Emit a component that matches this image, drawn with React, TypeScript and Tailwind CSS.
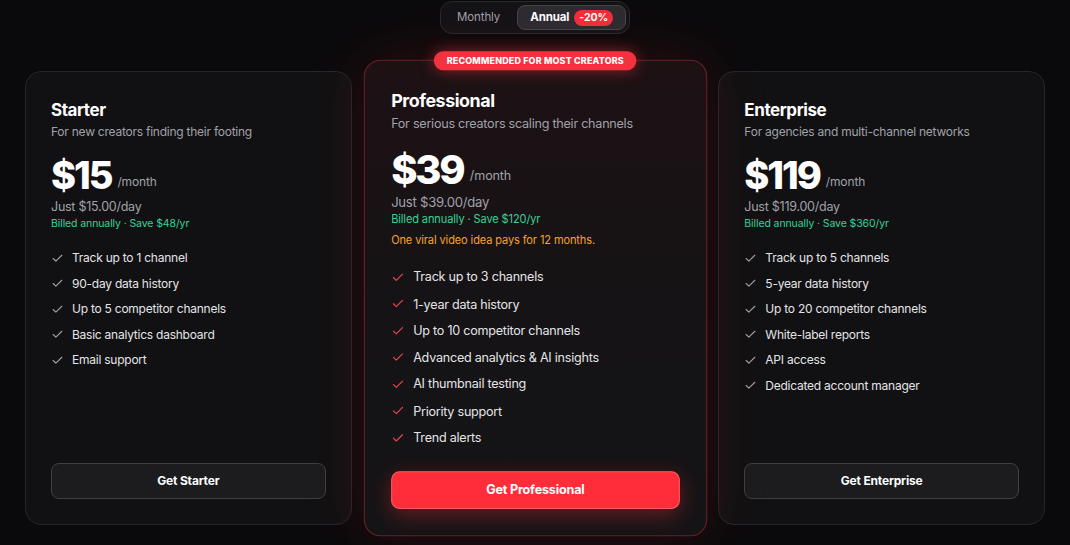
import React from "react";

type Plan = {
  name: string;
  tagline: string;
  price: string;
  perDay: string;
  billed: string;
  note?: string;
  features: string[];
  cta: string;
  featured?: boolean;
};

const plans: Plan[] = [
  {
    name: "Starter",
    tagline: "For new creators finding their footing",
    price: "$15",
    perDay: "Just $15.00/day",
    billed: "Billed annually · Save $48/yr",
    features: [
      "Track up to 1 channel",
      "90-day data history",
      "Up to 5 competitor channels",
      "Basic analytics dashboard",
      "Email support",
    ],
    cta: "Get Starter",
  },
  {
    name: "Professional",
    tagline: "For serious creators scaling their channels",
    price: "$39",
    perDay: "Just $39.00/day",
    billed: "Billed annually · Save $120/yr",
    note: "One viral video idea pays for 12 months.",
    features: [
      "Track up to 3 channels",
      "1-year data history",
      "Up to 10 competitor channels",
      "Advanced analytics & AI insights",
      "AI thumbnail testing",
      "Priority support",
      "Trend alerts",
    ],
    cta: "Get Professional",
    featured: true,
  },
  {
    name: "Enterprise",
    tagline: "For agencies and multi-channel networks",
    price: "$119",
    perDay: "Just $119.00/day",
    billed: "Billed annually · Save $360/yr",
    features: [
      "Track up to 5 channels",
      "5-year data history",
      "Up to 20 competitor channels",
      "White-label reports",
      "API access",
      "Dedicated account manager",
    ],
    cta: "Get Enterprise",
  },
];

function Check({ red }: { red?: boolean }) {
  return (
    <svg
      viewBox="0 0 24 24"
      className={red ? "h-[13px] w-[13px] shrink-0 text-[#f04452]" : "h-[13px] w-[13px] shrink-0 text-[#a1a1aa]"}
      fill="none"
      stroke="currentColor"
      strokeWidth={2}
      strokeLinecap="round"
      strokeLinejoin="round"
    >
      <path d="M20 6 9 17l-5-5" />
    </svg>
  );
}

function PlanCard({ plan }: { plan: Plan }) {
  const f = plan.featured;
  return (
    <div
      className={
        f
          ? "relative z-10 flex h-full scale-[1.05] flex-col rounded-2xl border border-[#6f1f27] bg-gradient-to-b from-[#1d1114] via-[#151315] to-[#141416] p-[25px] shadow-[0_0_60px_rgba(220,38,38,0.16)]"
          : "relative flex h-full flex-col rounded-2xl border border-[#26262a] bg-[#111113] p-[25px]"
      }
    >
      {f && (
        <div className="absolute left-1/2 top-0 -translate-x-1/2 -translate-y-1/2 whitespace-nowrap rounded-full bg-[#f2333f] px-3 py-[4px] text-[8.5px] font-extrabold uppercase leading-[10px] tracking-[0.02em] text-white shadow-[0_0_14px_rgba(242,51,63,0.55)]">
          Recommended for most creators
        </div>
      )}
      <h3 className="-mt-px text-[17px] font-bold leading-7 tracking-[-0.025em] text-white">{plan.name}</h3>
      <p className="text-[12px] leading-4 tracking-[-0.02em] text-[#a1a1aa]">{plan.tagline}</p>

      <div className="mt-4 flex items-end gap-[6px]">
        <span className="text-[38px] font-extrabold leading-[38px] tracking-[-0.055em] text-white">
          {plan.price}
        </span>
        <span className="pb-[4px] text-[12px] leading-4 tracking-[-0.01em] text-[#a1a1aa]">/month</span>
      </div>
      <p className="mt-1 text-[12.5px] leading-[18px] tracking-[-0.02em] text-[#a1a1aa]">{plan.perDay}</p>
      <p className="text-[10.5px] leading-4 tracking-[-0.01em] text-[#34d399]">{plan.billed}</p>
      {plan.note && (
        <p className="mt-1 text-[10.5px] leading-4 tracking-[-0.01em] text-[#f5a524]">{plan.note}</p>
      )}

      <ul className="mt-4 flex flex-col gap-[5.5px]">
        {plan.features.map((item) => (
          <li
            key={item}
            className="flex items-center gap-2 text-[12px] leading-5 tracking-[-0.02em] text-[#e4e4e7]"
          >
            <Check red={f} />
            <span>{item}</span>
          </li>
        ))}
      </ul>

      <button
        className={
          f
            ? "mt-auto h-9 w-full rounded-lg border border-[#ff5a63] bg-[#ff2d3a] text-[12px] font-bold tracking-[-0.015em] text-white shadow-[0_6px_20px_rgba(255,45,58,0.35)]"
            : "mt-auto h-9 w-full rounded-lg border border-[#3f3f46] bg-[#1c1c1f] text-[12px] font-bold tracking-[-0.015em] text-white"
        }
      >
        {plan.cta}
      </button>
    </div>
  );
}

export default function App() {
  return (
    <div
      className="min-h-screen overflow-hidden bg-[#0a0a0c] px-[25px] antialiased"
      style={{ fontFamily: "Inter, 'Noto Sans', 'Liberation Sans', sans-serif" }}
    >
      <div className="mt-px flex justify-center">
        <div className="flex items-center rounded-xl border border-[#2a2a2f] bg-[#131316] p-[3px]">
          <button className="h-[25px] px-[13px] text-[11.5px] tracking-[-0.01em] text-[#a1a1aa]">Monthly</button>
          <button className="ml-[4px] flex h-[25px] items-center gap-[5px] rounded-lg border border-[#45454c] bg-[#2c2c31] pl-3 pr-[12px] text-[11.5px] font-bold tracking-[-0.01em] text-white">
            Annual
            <span className="rounded-full bg-[#ef2f3b] px-[5px] text-[10.5px] font-bold leading-[16px] text-white">
              -20%
            </span>
          </button>
        </div>
      </div>

      <div className="mt-[37px] grid h-[454px] grid-cols-3 gap-5">
        {plans.map((p) => (
          <PlanCard key={p.name} plan={p} />
        ))}
      </div>
    </div>
  );
}
